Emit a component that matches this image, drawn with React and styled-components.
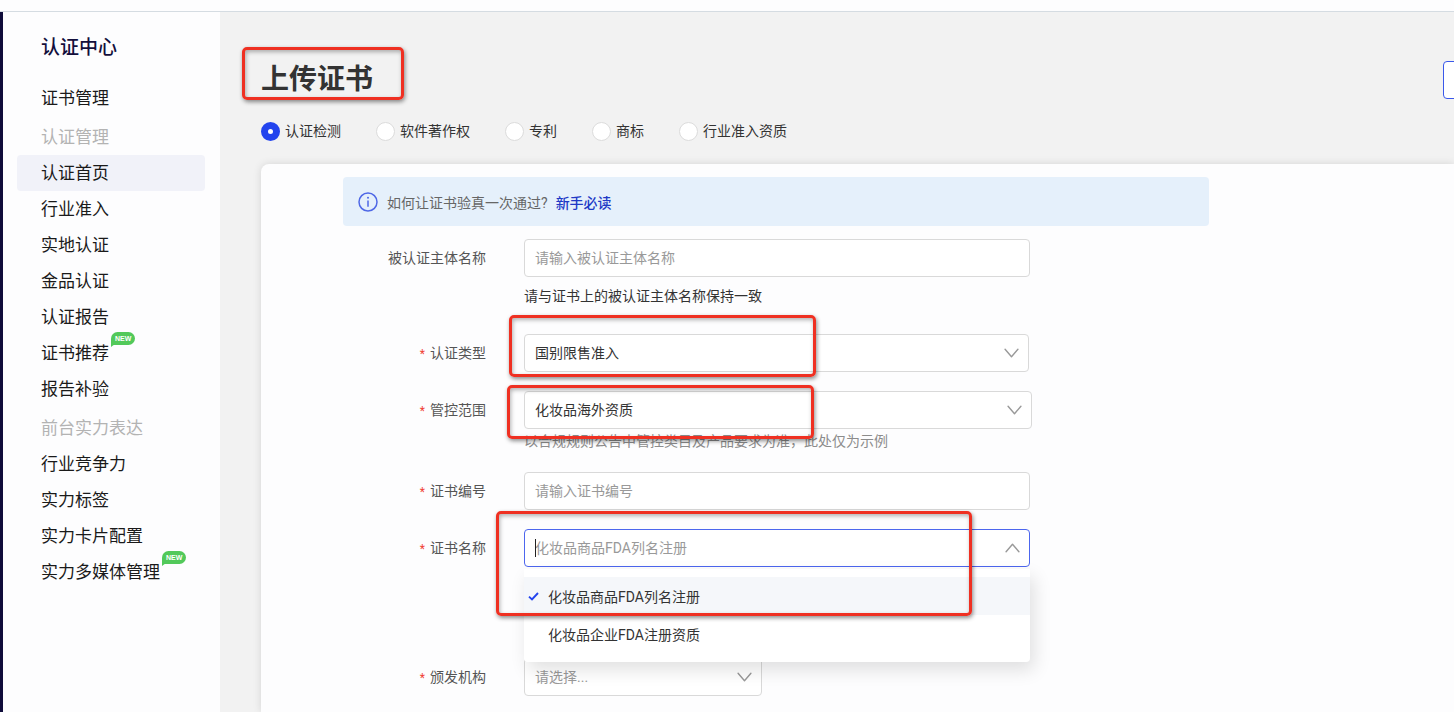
import React, { useState } from "react";
import styled, { createGlobalStyle } from "styled-components";

const MENU_MAIN = ["认证首页", "行业准入", "实地认证", "金品认证", "认证报告", "证书推荐", "报告补验"];
const MENU_FRONT = ["行业竞争力", "实力标签", "实力卡片配置", "实力多媒体管理"];
const NEW_ITEMS = ["证书推荐", "实力多媒体管理"];
const CERT_KINDS = ["认证检测", "软件著作权", "专利", "商标", "行业准入资质"];
const CERT_NAMES = ["化妆品商品FDA列名注册", "化妆品企业FDA注册资质"];

const Chevron = ({ up }) => (
    <ChevronSvg viewBox="0 0 14 9" $up={up} aria-hidden="true">
        <path d="M1 1l6 7 6-7" fill="none" stroke="currentColor" strokeWidth="1.3" strokeLinecap="round" strokeLinejoin="round" />
    </ChevronSvg>
);

const MenuList = ({ items, active, onSelect }) => (
    <List>
        {items.map((item) => (
            <li key={item}>
                <MenuLink href="#" $active={item === active} onClick={(e) => { e.preventDefault(); onSelect(item); }}>
                    {item}
                    {NEW_ITEMS.includes(item) && <NewBadge>NEW</NewBadge>}
                </MenuLink>
            </li>
        ))}
    </List>
);

const Field = ({ id, label, required, tall, children }) => (
    <Row $tall={tall}>
        <Label htmlFor={id}>
            {required && <Star>*</Star>}
            {label}
        </Label>
        <Control>{children}</Control>
    </Row>
);

const App = () => {
    const [active, setActive] = useState("认证首页");
    const [kind, setKind] = useState("认证检测");
    const [certName, setCertName] = useState(CERT_NAMES[0]);
    const [open, setOpen] = useState(true);

    const pickName = (name) => {
        setCertName(name);
        setOpen(false);
    };

    return (
        <Page>
            <GlobalStyle />
            <TopBar />
            <Body>
                <Sidebar>
                    <SideTitle>认证中心</SideTitle>
                    <MenuList items={["证书管理"]} active={active} onSelect={setActive} />
                    <section>
                        <GroupTitle>认证管理</GroupTitle>
                        <MenuList items={MENU_MAIN} active={active} onSelect={setActive} />
                    </section>
                    <section>
                        <GroupTitle>前台实力表达</GroupTitle>
                        <MenuList items={MENU_FRONT} active={active} onSelect={setActive} />
                    </section>
                </Sidebar>

                <Main>
                    <Header>
                        <Title>
                            上传证书
                            <Mark $top={-15} $left={-19} $width={162} $height={53} />
                        </Title>
                        <OutlineButton type="button" />
                    </Header>

                    <Kinds>
                        {CERT_KINDS.map((item) => (
                            <KindLabel key={item}>
                                <Radio type="radio" name="kind" checked={kind === item} onChange={() => setKind(item)} />
                                {item}
                            </KindLabel>
                        ))}
                    </Kinds>

                    <Card>
                        <Notice>
                            <InfoSvg viewBox="0 0 20 20" aria-hidden="true">
                                <circle cx="10" cy="10" r="9" fill="none" stroke="currentColor" strokeWidth="1.5" />
                                <circle cx="10" cy="5.8" r="1" fill="currentColor" />
                                <path d="M10 8.4v6.4" stroke="currentColor" strokeWidth="1.5" />
                            </InfoSvg>
                            <span>如何让证书验真一次通过?</span>
                            <NoticeLink href="#">新手必读</NoticeLink>
                        </Notice>

                        <Form>
                            <Field id="subject" label="被认证主体名称">
                                <Input id="subject" placeholder="请输入被认证主体名称" />
                                <Helper>请与证书上的被认证主体名称保持一致</Helper>
                            </Field>

                            <Field id="type" label="认证类型" required>
                                <SelectBox>
                                    <Select id="type">
                                        <option>国别限售准入</option>
                                    </Select>
                                    <Chevron />
                                </SelectBox>
                                <Mark $top={-19} $left={-15} $width={307} $height={62} />
                            </Field>

                            <Field id="scope" label="管控范围" required>
                                <SelectBox $width={508}>
                                    <Select id="scope">
                                        <option>化妆品海外资质</option>
                                    </Select>
                                    <Chevron />
                                </SelectBox>
                                <Hint>以合规规则公告中管控类目及产品要求为准，此处仅为示例</Hint>
                                <Mark $top={-6} $left={-17} $width={307} $height={54} />
                            </Field>

                            <Field id="number" label="证书编号" required>
                                <Input id="number" placeholder="请输入证书编号" />
                            </Field>

                            <Field id="name" label="证书名称" required tall>
                                <SelectBox $width={506}>
                                    <Input
                                        id="name"
                                        role="combobox"
                                        aria-expanded={open}
                                        aria-controls="name-options"
                                        placeholder={certName}
                                        onClick={() => setOpen(!open)}
                                        $focused={open}
                                    />
                                    {open && <Caret />}
                                    <Chevron up={open} />
                                    {open && (
                                        <Options id="name-options" role="listbox">
                                            {CERT_NAMES.map((name) => (
                                                <Option
                                                    key={name}
                                                    role="option"
                                                    aria-selected={name === certName}
                                                    $selected={name === certName}
                                                    onClick={() => pickName(name)}
                                                >
                                                    <CheckSlot>
                                                        {name === certName && (
                                                            <svg width="11" height="9" viewBox="0 0 11 9" aria-hidden="true">
                                                                <path d="M1 4.6l3 2.8L10 1" fill="none" stroke="#2344ee" strokeWidth="1.9" />
                                                            </svg>
                                                        )}
                                                    </CheckSlot>
                                                    {name}
                                                </Option>
                                            ))}
                                        </Options>
                                    )}
                                </SelectBox>
                                <Mark $top={-18} $left={-28} $width={476} $height={105} />
                            </Field>

                            <Field id="issuer" label="颁发机构" required>
                                <SelectBox $width={238}>
                                    <Select id="issuer" $empty>
                                        <option>请选择...</option>
                                    </Select>
                                    <Chevron />
                                </SelectBox>
                            </Field>
                        </Form>
                    </Card>
                </Main>
            </Body>
        </Page>
    );
};

export default App;

// Styles
const GlobalStyle = createGlobalStyle`
    * {
        box-sizing: border-box;
    }
    body {
        margin: 0;
        font-family: Roboto, "Noto Sans CJK SC", sans-serif;
        font-size: 14px;
        color: #333;
    }
    input, select, button {
        font: inherit;
        color: inherit;
    }
`;

const Page = styled.div`
    display: flex;
    flex-direction: column;
    min-height: 100vh;
    overflow: hidden;
    background: #f2f2f2;
`;

const TopBar = styled.header`
    height: 12px;
    background: #fdfdfe;
    border-bottom: 1px solid #d5dce2;
`;

const Body = styled.div`
    display: flex;
    flex: 1;
`;

const Sidebar = styled.nav`
    display: flex;
    flex-direction: column;
    gap: 3px;
    width: 220px;
    flex-shrink: 0;
    padding: 18px 15px 0 14px;
    background: #fdfdfe;
    border-left: 3px solid #0f0c3a;
`;

const SideTitle = styled.h2`
    margin: 0 0 11px;
    padding-left: 24px;
    font-size: 19px;
    line-height: 36px;
    font-weight: 500;
    color: #130f3c;
`;

const GroupTitle = styled.h3`
    margin: 0;
    padding-left: 24px;
    font-size: 17px;
    line-height: 36px;
    font-weight: 400;
    color: #b3b3b3;
`;

const List = styled.ul`
    margin: 0;
    padding: 0;
    list-style: none;
`;

const MenuLink = styled.a`
    display: flex;
    height: 36px;
    padding-left: 24px;
    border-radius: 4px;
    font-size: 17px;
    line-height: 36px;
    color: #1a1a1a;
    text-decoration: none;
    background: ${(p) => (p.$active ? "#f1f2f9" : "transparent")};
`;

const NewBadge = styled.span`
    position: relative;
    height: 13px;
    margin: -3px 0 0 2px;
    padding: 0 4px;
    border-radius: 7px 7px 7px 0;
    background: #52c95a;
    color: #fff;
    font-family: "Liberation Sans", sans-serif;
    font-size: 7px;
    font-weight: 700;
    line-height: 13px;
    &::after {
        content: "";
        position: absolute;
        top: 12px;
        left: 0;
        border-top: 3px solid #52c95a;
        border-right: 4px solid transparent;
    }
`;

const Main = styled.main`
    display: flex;
    flex-direction: column;
    flex: 1;
    min-width: 0;
    padding-left: 41px;
`;

const Header = styled.div`
    display: flex;
    justify-content: space-between;
    align-items: flex-start;
    padding-top: 50px;
`;

const Title = styled.h1`
    position: relative;
    margin: 0;
    font-size: 28px;
    line-height: 36px;
    font-weight: 700;
`;

// the action button runs past the right edge of the window
const OutlineButton = styled.button`
    flex-shrink: 0;
    width: 96px;
    height: 38px;
    margin: -1px -85px 0 0;
    background: #fff;
    border: 1px solid #3a58ea;
    border-radius: 4px;
`;

const Kinds = styled.div`
    display: flex;
    gap: 35px;
    padding: 22px 0 23px;
`;

const KindLabel = styled.label`
    display: flex;
    align-items: center;
    gap: 5px;
    height: 20px;
    line-height: 20px;
`;

const Radio = styled.input`
    appearance: none;
    width: 19px;
    height: 19px;
    margin: 0;
    border: 1px solid #dcdcdc;
    border-radius: 50%;
    background: #fff;
    &:checked {
        border: 7px solid #2344ee;
    }
`;

const Card = styled.section`
    flex: 1;
    padding: 13px 0 16px 82px;
    background: #fdfdfe;
    border-radius: 8px 0 0 0;
    box-shadow: 0 0 8px rgba(0, 0, 0, 0.12);
`;

const Notice = styled.div`
    display: flex;
    align-items: center;
    max-width: 866px;
    height: 49px;
    margin-bottom: 13px;
    padding-left: 15px;
    border-radius: 4px;
    background: #e5f0fb;
    color: #666;
`;

const InfoSvg = styled.svg`
    width: 20px;
    height: 20px;
    margin-right: 9px;
    color: #4f68e6;
`;

const NoticeLink = styled.a`
    margin-left: 8px;
    color: #2039c6;
    font-weight: 500;
    text-decoration: none;
`;

const Form = styled.form`
    display: flex;
    flex-direction: column;
    gap: 19px;
`;

const Row = styled.div`
    display: flex;
    gap: 38px;
    min-height: ${(p) => (p.$tall ? "110px" : "38px")};
`;

const Label = styled.label`
    width: 143px;
    flex-shrink: 0;
    line-height: 38px;
    text-align: right;
    color: #555;
`;

const Star = styled.span`
    margin-right: 5px;
    font-size: 12px;
    line-height: 12px;
    color: #f04134;
`;

const Control = styled.div`
    position: relative;
    flex: 1;
`;

const SelectBox = styled.div`
    position: relative;
    max-width: ${(p) => p.$width || 505}px;
`;

const Input = styled.input`
    display: block;
    width: 100%;
    max-width: 506px;
    height: 38px;
    padding: 0 10px;
    border: 1px solid ${(p) => (p.$focused ? "#4c66ee" : "#d9d9d9")};
    border-radius: 4px;
    background: #fff;
    outline: none;
    &::placeholder {
        color: #999;
        opacity: 1;
    }
`;

const Select = styled.select`
    appearance: none;
    display: block;
    width: 100%;
    height: 38px;
    padding: 0 32px 0 10px;
    border: 1px solid #d9d9d9;
    border-radius: 4px;
    background: #fff;
    color: ${(p) => (p.$empty ? "#999" : "#333")};
    outline: none;
`;

const ChevronSvg = styled.svg`
    position: absolute;
    top: 14px;
    right: 10px;
    width: 15px;
    height: 10px;
    color: #999;
    pointer-events: none;
    transform: ${(p) => (p.$up ? "rotate(180deg)" : "none")};
`;

const Caret = styled.span`
    position: absolute;
    top: 10px;
    left: 11px;
    width: 1px;
    height: 18px;
    background: #222;
`;

const Helper = styled.p`
    margin: 0;
    line-height: 38px;
`;

const Hint = styled.p`
    margin: 0;
    line-height: 24px;
    color: #8c8c8c;
`;

const Options = styled.ul`
    position: absolute;
    z-index: 1;
    top: 40px;
    left: 0;
    right: 0;
    margin: 0;
    padding: 8px 0 9px;
    list-style: none;
    background: #fff;
    border-radius: 0 0 4px 4px;
    box-shadow: 4px 8px 18px rgba(0, 0, 0, 0.12);
`;

const Option = styled.li`
    display: flex;
    align-items: center;
    height: 38px;
    padding-left: 4px;
    background: ${(p) => (p.$selected ? "#f5f7fa" : "transparent")};
    cursor: pointer;
`;

const CheckSlot = styled.span`
    display: flex;
    width: 20px;
`;

// red highlight frame drawn over the part it points out
const Mark = styled.span`
    position: absolute;
    z-index: 2;
    top: ${(p) => p.$top}px;
    left: ${(p) => p.$left}px;
    width: ${(p) => p.$width}px;
    height: ${(p) => p.$height}px;
    border: 3px solid #ef3022;
    border-radius: 5px;
    box-shadow: 1px 2px 4px rgba(0, 0, 0, 0.45), inset 1px 2px 4px rgba(0, 0, 0, 0.3);
    pointer-events: none;
`;
